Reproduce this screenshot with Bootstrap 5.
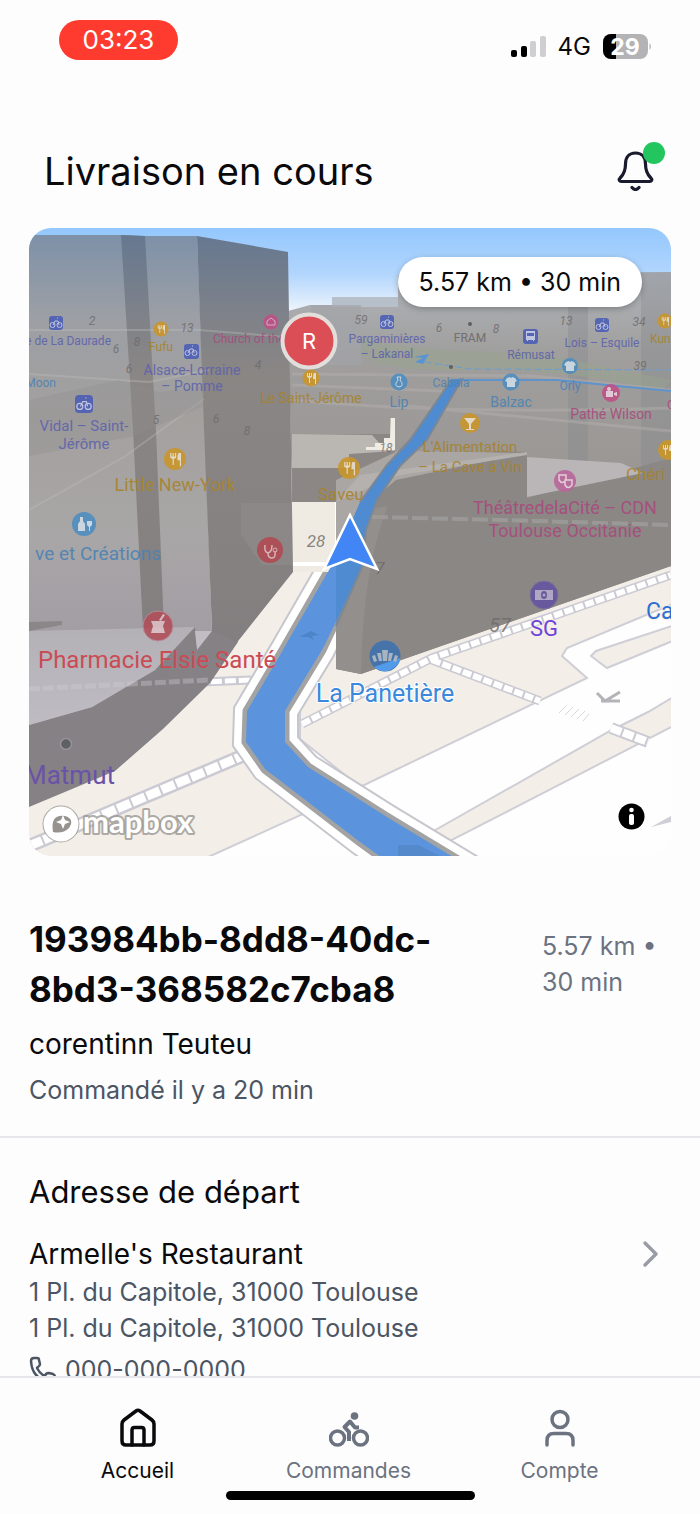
<!DOCTYPE html>
<html lang="fr">
<head>
<meta charset="utf-8">
<meta name="viewport" content="width=device-width, initial-scale=1">
<title>Livraison en cours</title>
<link rel="stylesheet" href="https://cdn.jsdelivr.net/npm/bootstrap@5.3.0/dist/css/bootstrap.min.css">
<style>
  body { font-family: Inter, "Liberation Sans", sans-serif; background: #fdfdfe; color: #0a0a0c; }
  a { color: inherit; text-decoration: none; }
  .statusbar { padding: 20px 47px 0 59px; height: 96px; }
  .time-pill { background: #ff3b30; font-size: 26px; line-height: 40px; width: 119px; }
  .network { font-size: 24px; line-height: 30px; padding-top: 12px; }
  .page-head { padding: 40px 44px 0; height: 132px; }
  .page-head h1 { font-size: 38px; line-height: 70px; font-weight: 400; }
  .bell { width: 40px; height: 44px; margin-top: 12px; }
  .bell-dot { width: 22px; height: 22px; background: #22c55e; top: -6px; right: -9px; }
  .content { min-height: 0; scrollbar-width: none; }
  .content::-webkit-scrollbar { display: none; }
  .map-card { margin: 0 29px; border-radius: 22px; }
  .map-card text { font-family: Roboto, "Liberation Sans", sans-serif; }
  .trip-pill { top: 29px; right: 29px; font-size: 25px; line-height: 50px; padding: 0 21px; box-shadow: 0 2px 6px rgba(0,0,0,.25); }
  .map-info { right: 26px; bottom: 26px; }
  .order { padding: 58px 29px 28px; }
  .order h2 { font-size: 35px; line-height: 50px; font-weight: 700; word-break: break-word; }
  .order-trip { width: 129px; font-size: 25px; line-height: 36px; color: #6b7280; }
  .customer { font-size: 28px; line-height: 40px; margin-top: 10px; }
  .detail { font-size: 25px; line-height: 36px; color: #4b5563; }
  .rule { border-top: 2px solid #e5e7eb; }
  .pickup { padding: 32px 29px; }
  .pickup h3 { font-size: 31px; line-height: 44px; font-weight: 400; margin-bottom: 20px; }
  .place { font-size: 28px; line-height: 40px; }
  .chevron { margin-right: 12px; }
  .phone { margin-top: 6px; }
  .tabbar { padding: 26px 35px 0 32px; height: 138px; font-size: 21px; line-height: 30px; color: #6b7280; background: #fdfdfe; }
  .tabbar a svg { display: block; margin: 0 auto 8px; }
  .tabbar .current { color: #0a0a0c; }
  .home-bar { width: 249px; height: 9px; background: #000; bottom: 14px; left: 0; right: 0; }
</style>
</head>
<body>
<div class="d-flex flex-column vh-100">
  <div class="statusbar flex-shrink-0 d-flex justify-content-between align-items-start">
    <span class="time-pill rounded-pill text-white text-center">03:23</span>
    <div class="network d-flex align-items-center">
      <svg width="35" height="22" class="me-2" aria-hidden="true"><rect y="14" width="6" height="7" rx="2"/><rect x="10" y="10" width="6" height="11" rx="2"/><g fill="#cfcfd1"><rect x="19" y="5" width="6" height="16" rx="2"/><rect x="29" width="6" height="21" rx="2"/></g></svg>
      <span class="me-2 ms-1">4G</span>
      <svg class="ms-1" width="50" height="26" aria-label="Batterie 29 %"><defs><clipPath id="cell"><rect width="45" height="25" rx="8"/></clipPath></defs><g clip-path="url(#cell)"><rect width="45" height="25" fill="#b3b3b5"/><rect width="13" height="25"/></g><path d="M46.500 9q3 3.500 0 7z" fill="#b3b3b5"/><text x="22" y="21" text-anchor="middle" font-size="23" font-weight="700" fill="#fff">29</text></svg>
    </div>
  </div>

  <header class="page-head flex-shrink-0 d-flex justify-content-between align-items-start">
    <h1 class="m-0">Livraison en cours</h1>
    <button type="button" class="bell btn p-0 border-0 position-relative" aria-label="Notifications">
      <svg class="d-block" width="40" height="42" viewBox="0 0 40 42" fill="none" stroke="#1a1a2e" stroke-width="3.200" stroke-linecap="round" stroke-linejoin="round"><path d="M19.500 4C13 4 9.500 8.500 9.500 15c0 7-2 10.500-5 13.500-2.500 2.500-1 4 1 4h28c2 0 3.500-1.500 1-4-3-3-5-6.500-5-13.500C29.500 8.500 26 4 19.500 4z"/><path d="M16 38.500q3.500 4 7 0"/></svg>
      <span class="bell-dot rounded-circle position-absolute"></span>
    </button>
  </header>

  <main class="content flex-grow-1 overflow-auto">
    <section class="map-card position-relative overflow-hidden" aria-label="Carte">
      <svg class="d-block w-100" viewBox="29 228 642 628">
        <defs>
          <linearGradient id="sky" x1="0" y1="0" x2="0" y2="1"><stop offset="0" stop-color="#94c7fd"/><stop offset=".55" stop-color="#b2d6fd"/><stop offset="1" stop-color="#eff5fc"/></linearGradient>
          <linearGradient id="far" x1="0" y1="0" x2="0" y2="1"><stop offset="0" stop-color="#b1b5bb"/><stop offset=".2" stop-color="#a09f9e"/><stop offset=".55" stop-color="#999592"/><stop offset="1" stop-color="#8e8a88"/></linearGradient>
          <linearGradient id="lit" gradientUnits="userSpaceOnUse" x1="0" y1="235" x2="0" y2="640"><stop offset="0" stop-color="#7e91a8"/><stop offset=".2" stop-color="#9c9fa5"/><stop offset=".45" stop-color="#a3a09e"/><stop offset=".75" stop-color="#a9a6a7"/><stop offset="1" stop-color="#a19da4"/></linearGradient>
          <linearGradient id="shade" gradientUnits="userSpaceOnUse" x1="0" y1="235" x2="0" y2="640"><stop offset="0" stop-color="#667890"/><stop offset=".2" stop-color="#7f8289"/><stop offset=".35" stop-color="#8a8684"/><stop offset="1" stop-color="#837f80"/></linearGradient>
          <linearGradient id="roof" x1="0" y1="0" x2="0" y2="1"><stop offset="0" stop-color="#b3b0b6"/><stop offset="1" stop-color="#bebbc3"/></linearGradient>
          <g id="fork" fill="#e9dfcc"><path d="M-4-5h1v3h1v-3h1v3h1v-3h1v4l-2 1v5h-1v-5l-2-1zM3-5h2v11h-1V1H2q0-5 1-6z"/></g>
          <g id="bike" fill="none" stroke="#c3c8e6" stroke-width="1"><circle cx="-3.500" cy="2" r="2.500"/><circle cx="3.500" cy="2" r="2.500"/><path d="M-3 2l2-4h3l1 4M1-5h1"/></g>
        </defs>
        <rect x="29" y="228" width="642" height="628" fill="#fefefe"/>

        <!-- pavements -->
        <g fill="#f3eee8" stroke="#cfced6" stroke-width="2">
          <path d="M20 560H345L330 640 240 745 303 814 206 858H20z"/>
          <path d="M300 640l371-80 4 43-108 45-5 8 25 22-227 109-60-48z"/>
          <path d="M430 833l180-102 38-19 27-16v29L448 842z"/>
          <path d="M591 656l5-5 79-26v15l-68 28z"/>
        </g>
        <path d="M651 827l20-11v6zM648 857l14-3z" fill="#cfced6"/>
        <g fill="none">
          <g stroke="#cbcad3"><path d="M29 846l213-90" stroke-width="14"/><path d="M29 689l222-9M302 724l130-66 239-83M432 660l108 41" stroke-width="9"/><path d="M611 728l37 14" stroke-width="12"/></g>
          <g stroke="#fff"><path d="M29 846l213-90" stroke-width="9" stroke-dasharray="14 2"/><path d="M29 689l222-9" stroke-width="5" stroke-dasharray="11 3"/><path d="M302 724l130-66 239-83M432 660l108 41" stroke-width="6" stroke-dasharray="9 2"/><path d="M611 728l37 14" stroke-width="8" stroke-dasharray="11 2"/></g>
        </g>
        <path d="M597 693l8 8 15-9M601 701h19" fill="none" stroke="#b4b3b8" stroke-width="3"/>
        <path d="M559 713l7-7M565 715l8-8M571 717l8-8M577 719l8-8M583 721l6-7" stroke="#d8d7dc" stroke-width="1"/>

        <!-- lower part of the street with its kerbs -->
        <defs><path id="street" d="M332 565L283 650 247 711 246 742 265 769 360 842 385 860H458L387 817 308 767 285 742V711L322 650 362 565z"/></defs>
        <use href="#street" fill="#c6c6cd" stroke="#c6c6cd" stroke-width="28"/>
        <use href="#street" fill="#fff" stroke="#fff" stroke-width="24"/>
        <use href="#street" fill="#5b94dc" stroke="#a3a3a4" stroke-width="9"/>
        <use href="#street" fill="#5b94dc"/>
        <path d="M398 845h20l22 11h-42z" fill="#5489cc"/>

        <!-- sky and distant blocks -->
        <rect x="29" y="228" width="642" height="84" fill="url(#sky)"/>
        <path d="M288 311l22-6h22v-8h66v-22l273-3v294L361 674l-25-5V502h-44z" fill="url(#far)"/>
        <path d="M332 297h66v10h-66z" fill="#b7bfca"/>
        <path d="M311 305h50v60h-50z" fill="#a2a4a8" opacity=".7"/>
        <path d="M641 272h30v240h-30zM568 300h20v230h-20z" fill="#85888d" opacity=".35"/>
        <path d="M361 340q80 14 170 12l140 28-10 12q-90-24-190-22t-110-18z" fill="#97a48d" opacity=".5"/>
        <path d="M292 400q160 15 379 8M292 374l240 2 139 14M398 405l273 26M292 385l150 6" fill="none" stroke="#b1aeab" stroke-width="3" opacity=".5"/>
        <path d="M292 434h100l3 20-55 25 10 23h-58z" fill="#8c8784"/>
        <path d="M292 434l80 1 12 13 6-5v-25h4v33l-45 3v14h-57z" fill="#bab6b2"/>
        <path d="M366 450v-3h9v-4h9v-5h6l1-20h4v32z" fill="#efebe5"/>
        <path d="M292 502h43v70h-43z" fill="#f0ebe2"/>
        <path d="M292 564h38" stroke="#fff" stroke-width="4"/>
        <path d="M336 480l160-29 31 1v46l144-40v108L361 674l-25-5z" fill="#8b8785"/>
        <path d="M336 480l62-29 128 2-130 27-35 30-25 70z" fill="#aaa6a3"/>
        <path d="M360 475l167-23v3l-131 21-60 26z" fill="#b5b1ae"/>
        <path d="M527 457l94 6 22 10-116 24z" fill="#bab5b7"/>
        <path d="M372 517l130 3 169 5" fill="none" stroke="#aaa7a5" stroke-width="4" stroke-dasharray="16 4" opacity=".55"/>
        <path d="M336 560l26-50 26-4q-25 60-27 168l-25-5z" fill="#a09d9b" opacity=".35"/>
        <path d="M423 364l6-10-15 3 9 1-8 4z" fill="#5795d6"/>
        <path d="M425 362l45 7 201 1" fill="none" stroke="#6b9cd2" stroke-width="1" stroke-dasharray="7 3"/>
        <path d="M457 380h100l50 5 64 6" fill="none" stroke="#5e93cc" stroke-width="2"/>

        <!-- route seen through the blocks -->
        <path d="M452 379h10L427 440 400 466 377 500 366 530 362 567 336 622V558L360 502 387 465 410 440z" fill="#4f8bd0"/>
        <path d="M462 379L427 440 400 466 377 500 366 530 362 567 336 626M360 502L387 465 410 440 452 379" fill="none" stroke="#7d8794" stroke-width="2"/>
        <path d="M336 555v67l-12 24-41 4 49-85z" fill="#5b94dc"/>
        <path d="M299 637l12-6 8 4-7 1 2 4-6-3z" fill="#4e85c8"/>

        <!-- tall blocks on the left -->
        <path d="M29 235h92l24 1h52l8 194 7 201-15 19H29z" fill="url(#lit)"/>
        <path d="M121 235l24 1 11 194 8 200h-21l-10-200z" fill="url(#shade)"/>
        <path d="M197 236l91 16 5 320-62 78-34 30-3-33 18-17-8-201z" fill="url(#shade)"/>
        <path d="M241 503h51v62h-30l-21-30z" fill="#a39f9a" opacity=".2"/>
        <path d="M29 510l95-53 80-58M29 374l120 8 60-12M29 330h170l100 8" fill="none" stroke="#c1bfbc" stroke-width="2" opacity=".35"/>
        <path d="M29 400l90-20 40 12 45-6v20l-70 30-105 20z" fill="#8f8e90" opacity=".3"/>
        <path d="M29 631l166-4v16l-40 27-63 37-63 18z" fill="url(#roof)"/>
        <path d="M29 622l33-1v4l-33 6z" fill="#8b8789"/>
        <path d="M29 725l63-18 63-37 40-43 2 23 15-19 26 11-28 41-47 46-48 42-86 36z" fill="#858185"/>
        <path d="M195 631h17l-15 19z" fill="#c0bdc5"/>
        <path d="M29 689l181-9" stroke="#d2d0d6" stroke-width="5" stroke-dasharray="11 3" opacity=".35"/>

        <!-- house numbers -->
        <g font-size="12" font-style="italic" fill="#6d6b6c" text-anchor="middle" opacity=".8">
          <text x="92" y="325">2</text><text x="137" y="346">8</text><text x="187" y="332">13</text><text x="116" y="353">6</text><text x="129" y="373">6</text><text x="258" y="369">4</text><text x="216" y="423">6</text><text x="247" y="435">8</text><text x="156" y="424">5</text><text x="361" y="324">59</text><text x="439" y="332">6</text><text x="496" y="333">8</text><text x="566" y="325">13</text><text x="639" y="326">34</text><text x="640" y="370">39</text><text x="386" y="452">18</text>
          <text x="316" y="547" font-size="17">28</text><text x="500" y="632" font-size="20">57</text><text x="380" y="574" font-size="17">7</text>
        </g>

        <!-- place names -->
        <g text-anchor="middle" font-size="12" opacity=".88">
          <g fill="#5d62ad"><text x="111" y="345" text-anchor="end">e de La Daurade</text><text x="192" y="375" font-size="14">Alsace-Lorraine</text><text x="192" y="391" font-size="14">– Pomme</text><text x="84" y="431" font-size="15">Vidal – Saint-</text><text x="84" y="449" font-size="15">Jérôme</text><text x="387" y="343">Pargaminières</text><text x="387" y="358">– Lakanal</text><text x="531" y="359">Rémusat</text><text x="602" y="347">Lois – Esquile</text></g>
          <g fill="#a8832b"><text x="161" y="351">Fufu</text><text x="311" y="403" font-size="14">Le Saint-Jérôme</text><text x="175" y="491" font-size="18">Little New-York</text><text x="318" y="500" font-size="17" text-anchor="start">Saveu</text><text x="650" y="343" text-anchor="start">Kun</text><text x="470" y="452" font-size="15">L'Alimentation</text><text x="470" y="472" font-size="15">– La Cave à Vin</text><text x="626" y="480" font-size="17" text-anchor="start">Chéri</text></g>
          <g fill="#4a82b4"><text x="56" y="387" text-anchor="end">Moon</text><text x="161" y="560" font-size="19" text-anchor="end">ve et Créations</text><text x="399" y="407" font-size="14">Lip</text><text x="451" y="387">Cabaïa</text><text x="511" y="407" font-size="14">Balzac</text><text x="570" y="390">Orly</text></g>
          <g fill="#a84a7c"><text x="213" y="343" text-anchor="start">Church of the</text><text x="611" y="419" font-size="14">Pathé Wilson</text><text x="667" y="409" text-anchor="start">C</text><text x="565" y="514" font-size="18">ThéâtredelaCité – CDN</text><text x="565" y="537" font-size="18">Toulouse Occitanie</text></g>
          <text x="470" y="342" fill="#6b696a">FRAM</text>
        </g>
        <g paint-order="stroke" stroke-width="2" stroke-linejoin="round" text-anchor="middle">
          <text x="544" y="636" font-size="22" fill="#6f42d8" stroke="#f3eee8">SG</text>
          <text x="646" y="619" font-size="23" fill="#2f6fd0" stroke="#f3eee8" text-anchor="start">Ca</text>
          <text x="385" y="702" font-size="25" fill="#3b88dc" stroke="#fff">La Panetière</text>
        </g>
        <text x="38" y="668" font-size="24" fill="#cb4b55">Pharmacie Elsie Santé</text>
        <text x="115" y="784" font-size="26" fill="#6a52a8" text-anchor="end">Matmut</text>

        <!-- place markers -->
        <g opacity=".9">
        <g fill="#4d5fb5"><rect x="49" y="316" width="14" height="14" rx="3"/><rect x="184" y="344" width="15" height="15" rx="3"/><rect x="75" y="395" width="18" height="18" rx="4"/><rect x="380" y="315" width="14" height="14" rx="3"/><rect x="523" y="329" width="15" height="15" rx="3"/><rect x="595" y="318" width="14" height="14" rx="3"/></g>
        <use href="#bike" x="56" y="323"/><use href="#bike" x="191" y="351"/><use href="#bike" x="387" y="322"/><use href="#bike" x="602" y="325"/>
        <use href="#bike" transform="translate(84 404) scale(1.200)"/>
        <path d="M526 331h9v9h-1v1h-1v-1h-5v1h-1v-1h-1zM527 333v3h7v-3z" fill="#c3c8e6" fill-rule="evenodd"/>
        <g fill="#c9962c"><circle cx="161" cy="329" r="7.500"/><circle cx="311" cy="378" r="8.500"/><circle cx="175" cy="459" r="11"/><circle cx="349" cy="468" r="11"/><circle cx="470" cy="423" r="10"/><circle cx="665" cy="321" r="7.500"/><circle cx="668" cy="450" r="10"/></g>
        <use href="#fork" transform="translate(161 329) scale(.8)"/><use href="#fork" x="311" y="378"/><use href="#fork" transform="translate(175 459) scale(1.200)"/><use href="#fork" transform="translate(349 468) scale(1.200)"/><use href="#fork" transform="translate(665 321) scale(.8)"/><use href="#fork" x="667" y="450"/>
        <path d="M464 418h12l-5 6v5h3v1h-8v-1h3v-5z" fill="#eadfc8"/>
        <g fill="#4f8dc0"><circle cx="84" cy="524" r="12"/><circle cx="399" cy="382" r="8.500"/><circle cx="511" cy="382" r="8.500"/><circle cx="570" cy="366" r="8"/></g>
        <g fill="#cfdce6"><path id="shirt" d="M507 378l3-1q1 2 2 0l3 1 2 3-2 1v5h-8v-5l-2-1z"/><use href="#shirt" x="59" y="-16"/><path d="M80 517h3v4l2 3v7h-7v-7l2-3zM87 521h5v4l-2 2v4h-1v-4l-2-2z"/></g>
        <path d="M397 377h4l-1 3q5 6-1 7-6-1-1-7z" fill="none" stroke="#cfdce6"/>
        <g fill="#bf5187"><circle cx="271" cy="322" r="7.500"/><circle cx="611" cy="393" r="9"/><circle cx="565" cy="481" r="11" fill="#b8679a"/></g>
        <path d="M267 325v-4l4-3 4 3v4z" fill="none" stroke="#dcb5c8"/>
        <path d="M606 391h7v6h-7zM614 393l3-1v4l-3-1z" fill="#e8cfdc"/><circle cx="609" cy="389" r="2" fill="#e8cfdc"/>
        <path d="M559 475h7v5q-4 5-7 0zM565 480h7v5q-4 5-7 0z" fill="#b8679a" stroke="#e8cfdc" stroke-width="1.500"/>
        <circle cx="270" cy="550" r="13" fill="#b14a53"/><path d="M265 545q-1 7 3 8 4-1 4-8M268 553q0 5 4 5t3-7" fill="none" stroke="#dfb9bc" stroke-width="1.500"/><circle cx="275" cy="550" r="2" fill="none" stroke="#dfb9bc"/>
        <circle cx="158" cy="626" r="15" fill="#b0505b" stroke="#b98d96"/><path d="M151 621h14l-2 5 2 7h-14l2-7zM159 620l4-6 2 1-4 6z" fill="#dcbfc4"/>
        <circle cx="544" cy="595" r="14" fill="#6553a0" stroke="#7b7299"/><path d="M535 590h18v10h-18zM541 595a3 4 0 1 0 6 0 3 4 0 1 0-6 0z" fill="#b4abcb" fill-rule="evenodd"/><circle cx="544" cy="595" r="1.500" fill="#b4abcb"/>
        </g>
        <circle cx="385" cy="656" r="15.500" fill="#4674aa"/><path d="M374 667q11 9 22-1 5-5 4-8z" fill="#519bea"/><path d="M382 650h6l-1 11h-4zM377 653l4 0 1 8h-3zM389 653l4 0-2 8h-3zM372 656l3-1 2 6-3 1zM395 655l3 1-2 6-3-1z" fill="#a9b4c0"/>
        <g fill="#5f6062"><circle cx="66" cy="744" r="5.500" stroke="#96939a" stroke-width="1.500"/><circle cx="470" cy="324" r="2"/><circle cx="451" cy="367" r="2"/></g>

        <!-- restaurant pin and courier arrow -->
        <circle cx="309" cy="341" r="26.500" fill="#dc4e55" stroke="#e2dedc" stroke-width="4"/>
        <text x="309" y="349" font-size="22" fill="#fff" text-anchor="middle" style="font-family:Inter,sans-serif">R</text>
        <path d="M350 515l27 54-27-10-26 10z" fill="#4286f5" stroke="#fff" stroke-width="2.500" stroke-linejoin="miter"/>

        <!-- map provider mark -->
        <g stroke="#96938f" stroke-opacity=".75" paint-order="stroke">
          <circle cx="61" cy="824" r="17.500" fill="#fff" stroke-width="2"/>
          <path d="M53 832q-3-18 12-16 10 3 4 12-6 6-16 4z" fill="#96938f" stroke="none"/><path d="M63 815l2 5 5 2-5 2-2 5-2-5-5-2 5-2z" fill="#fff" stroke="none"/>
          <text x="83" y="833" font-size="31" fill="#fff" stroke-width="4" stroke-linejoin="round" style="font-family:Lato,sans-serif;font-weight:700">mapbox</text>
        </g>
      </svg>
      <span class="trip-pill position-absolute rounded-pill bg-white">5.57 km • 30 min</span>
      <button type="button" class="map-info btn p-0 border-0 position-absolute lh-1" aria-label="Informations sur la carte"><svg class="d-block" width="27" height="27" viewBox="0 0 27 27"><circle cx="13.500" cy="13.500" r="13"/><g fill="#fff"><circle cx="13.500" cy="7" r="2.300"/><rect x="11" y="11" width="5" height="11" rx="2"/></g></svg></button>
    </section>

    <section class="order">
      <div class="d-flex justify-content-between align-items-center gap-5">
        <h2 class="m-0">193984bb-8dd8-40dc-<wbr>8bd3-368582c7cba8</h2>
        <span class="order-trip flex-shrink-0">5.57 km • 30 min</span>
      </div>
      <p class="customer mb-2">corentinn Teuteu</p>
      <p class="detail m-0">Commandé il y a 20 min</p>
    </section>

    <section class="pickup rule">
      <h3>Adresse de départ</h3>
      <a href="#restaurant" class="d-flex justify-content-between align-items-center place">
        <span>Armelle's Restaurant</span>
        <svg width="18" height="28" viewBox="0 0 18 28" class="chevron" fill="none" stroke="#9a9ca5" stroke-width="3.500" stroke-linecap="round" stroke-linejoin="round"><path d="M4 3l11 11L4 25"/></svg>
      </a>
      <address class="detail m-0">1 Pl. du Capitole, 31000 Toulouse<br>1 Pl. du Capitole, 31000 Toulouse</address>
      <a href="tel:0000000000" class="detail phone d-flex align-items-center"><svg class="me-2" width="28" height="28" viewBox="0 0 28 28" fill="none" stroke="currentColor" stroke-width="2.500" stroke-linejoin="round"><path d="M2 5q0-3 3-3h3q2 0 2 2l1 4q0 2-2 3l-1 1q3 6 8 8l1-2q1-1 3-1l4 1q2 1 2 3v2q0 3-3 3Q3 24 2 5z"/></svg>000-000-0000</a>
    </section>
  </main>

  <nav class="tabbar rule position-relative flex-shrink-0" aria-label="Navigation principale">
    <div class="row g-0 text-center">
      <a href="#accueil" class="col current"><svg width="40" height="44" viewBox="0 0 40 44" fill="none" stroke="currentColor" stroke-width="3.500" stroke-linejoin="round" stroke-linecap="round"><path d="M4 20q0-2.500 2-4L18 7q2-1.500 4 0l12 9q2 1.500 2 4v17q0 4-4 4H8q-4 0-4-4z"/><path d="M14 41V26q0-2.500 2.500-2.500h7q2.500 0 2.500 2.500v15"/></svg>Accueil</a>
      <a href="#commandes" class="col"><svg width="40" height="44" viewBox="0 0 40 44" fill="none" stroke="currentColor" stroke-width="3.500" stroke-linejoin="round"><circle cx="8.500" cy="34" r="7"/><circle cx="31.500" cy="34" r="7"/><circle cx="25.500" cy="12" r="3.800" fill="currentColor" stroke="none"/><path d="M20 37v-9l-4.500-5 5.500-5.500 5 6h4" stroke-width="4"/></svg>Commandes</a>
      <a href="#compte" class="col"><svg width="40" height="44" viewBox="0 0 40 44" fill="none" stroke="currentColor" stroke-width="3.500" stroke-linecap="round"><circle cx="20" cy="15.500" r="8"/><path d="M7 41v-4.500q0-7 7-7h12q7 0 7 7V41"/></svg>Compte</a>
    </div>
    <div class="home-bar position-absolute rounded-pill mx-auto"></div>
  </nav>
</div>
<script src="https://cdn.jsdelivr.net/npm/bootstrap@5.3.0/dist/js/bootstrap.bundle.min.js"></script>
</body>
</html>
